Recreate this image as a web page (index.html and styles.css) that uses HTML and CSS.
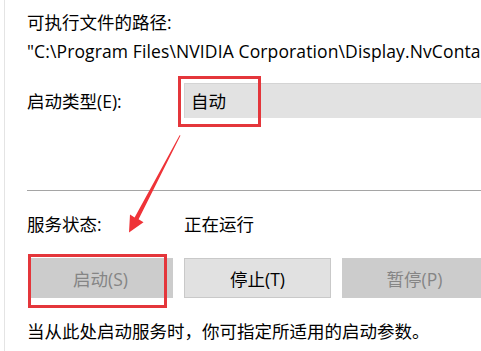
FILE: index.html
```html
<!DOCTYPE html>
<html lang="zh-CN">
<head>
<meta charset="utf-8">
<title>服务属性</title>
<link rel="stylesheet" href="styles.css">
</head>
<body>
<div class="frame">
  <div class="content">
    <div class="line">可执行文件的路径:</div>
    <div class="line path">"C:\Program Files\NVIDIA Corporation\Display.NvConta</div>
    <div class="row startup">
      <div class="label">启动类型(E):</div>
      <div class="combo">自动</div>
    </div>
    <div class="sep"></div>
    <div class="row status">
      <div class="label">服务状态:</div>
      <div class="value">正在运行</div>
    </div>
    <div class="buttons">
      <div class="btn disabled">启动(S)</div>
      <div class="btn active wide">停止(T)</div>
      <div class="btn disabled">暂停(P)</div>
    </div>
    <div class="line note">当从此处启动服务时，你可指定所适用的启动参数。</div>
  </div>
  <div class="mark mark-combo"></div>
  <div class="mark mark-start"></div>
  <svg class="arrow" width="481" height="351" viewBox="0 0 481 351">
    <polygon points="180.5,135.5 138.6,219.2 143.5,222.3 129,232.5 130,214.6 134.6,217.4 179.6,135.3" fill="#ef3338"/>
  </svg>
</div>
</body>
</html>
```
FILE: styles.css
```css
html, body {
  margin: 0;
  padding: 0;
  background: #ffffff;
}
body {
  width: 481px;
  height: 351px;
  overflow: hidden;
  font-family: "Open Sans", "Noto Sans CJK SC", sans-serif;
  font-size: 17.5px;
  color: #000000;
}
.frame {
  position: relative;
  width: 481px;
  height: 351px;
  overflow: hidden;
}
.frame::before {
  content: "";
  position: absolute;
  left: 4px;
  top: 0;
  bottom: 0;
  border-left: 1px solid #e4e4e4;
}
.content {
  padding: 10px 0 0 27px;
}
.line {
  height: 24px;
  line-height: 24px;
  white-space: nowrap;
}
.path {
  margin-top: 5px;
  letter-spacing: 0.12px;
}
.row {
  display: flex;
  align-items: center;
  white-space: nowrap;
}
.label {
  width: 157px;
  flex: none;
  line-height: 24px;
}
.startup {
  margin-top: 20px;
  height: 35px;
}
.combo {
  flex: 1;
  height: 35px;
  line-height: 35px;
  background: #e2e2e2;
  border-top: 1px solid #d4d4d4;
  border-left: 1px solid #d4d4d4;
  box-sizing: border-box;
  padding-left: 6px;
}
.sep {
  margin-top: 72px;
  height: 1px;
  background: #a5a5a5;
}
.status {
  margin-top: 21px;
  height: 24px;
}
.value {
  line-height: 24px;
}
.buttons {
  display: flex;
  gap: 11px;
  margin-top: 22px;
  margin-left: 1px;
  white-space: nowrap;
}
.btn {
  flex: none;
  width: 145px;
  height: 40px;
  box-sizing: border-box;
  display: flex;
  align-items: center;
  justify-content: center;
}
.btn.wide {
  width: 147px;
}
.disabled {
  background: #cccccc;
  color: #858585;
}
.active {
  background: #e1e1e1;
  border: 1px solid #c9c9c9;
  color: #000000;
}
.note {
  margin-top: 21px;
}
.mark {
  position: absolute;
  border: 3px solid #e4363b;
  box-sizing: border-box;
}
.mark-combo {
  left: 178px;
  top: 76px;
  width: 83px;
  height: 51px;
}
.mark-start {
  left: 28px;
  top: 254px;
  width: 139px;
  height: 54px;
}
.arrow {
  position: absolute;
  left: 0;
  top: 0;
  pointer-events: none;
}
```
